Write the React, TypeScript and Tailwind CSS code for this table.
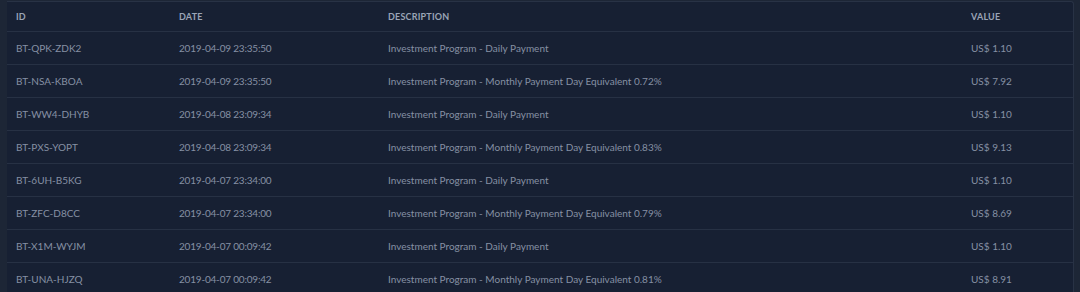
const rows = [
  ["BT-QPK-ZDK2", "2019-04-09 23:35:50", "Investment Program - Daily Payment", "US$ 1.10"],
  ["BT-NSA-KBOA", "2019-04-09 23:35:50", "Investment Program - Monthly Payment Day Equivalent 0.72%", "US$ 7.92"],
  ["BT-WW4-DHYB", "2019-04-08 23:09:34", "Investment Program - Daily Payment", "US$ 1.10"],
  ["BT-PXS-YOPT", "2019-04-08 23:09:34", "Investment Program - Monthly Payment Day Equivalent 0.83%", "US$ 9.13"],
  ["BT-6UH-B5KG", "2019-04-07 23:34:00", "Investment Program - Daily Payment", "US$ 1.10"],
  ["BT-ZFC-D8CC", "2019-04-07 23:34:00", "Investment Program - Monthly Payment Day Equivalent 0.79%", "US$ 8.69"],
  ["BT-X1M-WYJM", "2019-04-07 00:09:42", "Investment Program - Daily Payment", "US$ 1.10"],
  ["BT-UNA-HJZQ", "2019-04-07 00:09:42", "Investment Program - Monthly Payment Day Equivalent 0.81%", "US$ 8.91"],
];

const cols = "grid grid-cols-[163px_209px_583px_1fr]";

export default function App() {
  return (
    <div className="h-[292px] w-[1080px] overflow-hidden bg-[#1d2636] pl-[7px] pr-[6px] pt-[1px] font-['Lato',sans-serif]">
      <div className="rounded-tr-[3px] border-t border-r border-[#283245] bg-[#172033]">
        <div className={`${cols} h-[30px] items-center border-b border-[#273144] text-[9px] font-bold tracking-[0.2px] text-[#9aa4b6]`}>
          <div className="pl-[9px]">ID</div>
          <div className="pl-[9px]">DATE</div>
          <div className="pl-[9px]">DESCRIPTION</div>
          <div className="pl-[9px]">VALUE</div>
        </div>
        {rows.map((r) => (
          <div
            key={r[0]}
            className={`${cols} h-[33px] items-center border-b border-[#273144] text-[10px] text-[#8690a4]`}
          >
            <div className="pl-[9px]">{r[0]}</div>
            <div className="pl-[9px] tracking-[-0.2px]">{r[1]}</div>
            <div className="pl-[9px]">{r[2]}</div>
            <div className="pl-[9px]">{r[3]}</div>
          </div>
        ))}
      </div>
    </div>
  );
}
